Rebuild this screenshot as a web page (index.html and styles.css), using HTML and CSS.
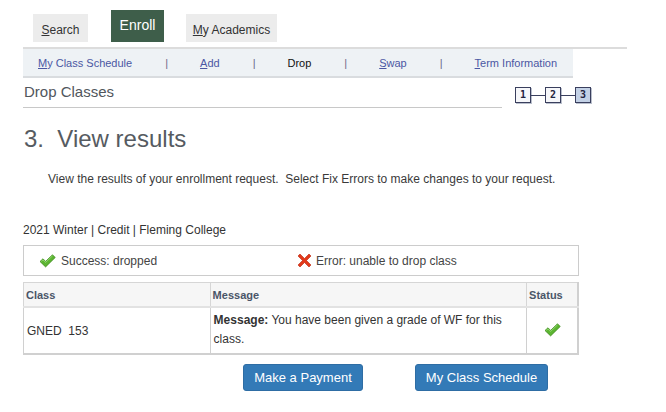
FILE: index.html
```html
<!DOCTYPE html>
<html>
<head>
<meta charset="utf-8">
<link rel="stylesheet" href="styles.css">
</head>
<body>
<div class="page">
  <div class="tabs">
    <div class="tab tab-search"><u>S</u>earch</div>
    <div class="tab tab-active">Enroll</div>
    <div class="tab tab-acad"><u>M</u>y Academics</div>
  </div>
  <div class="tabline"></div>
  <div class="subnav">
    <span class="lnk"><u>M</u>y Class Schedule</span>
    <span class="sep">|</span>
    <span class="lnk"><u>A</u>dd</span>
    <span class="sep">|</span>
    <span class="cur">Drop</span>
    <span class="sep">|</span>
    <span class="lnk"><u>S</u>wap</span>
    <span class="sep">|</span>
    <span class="lnk"><u>T</u>erm Information</span>
  </div>
  <div class="titlerow">
    <div class="pagetitle">Drop Classes</div>
    <div class="steps">
      <span class="step">1</span><span class="conn"></span><span class="step">2</span><span class="conn"></span><span class="step step-cur">3</span>
    </div>
  </div>
  <h1 class="h1">3.&nbsp; View results</h1>
  <p class="instr">View the results of your enrollment request.&nbsp; Select Fix Errors to make changes to your request.</p>
  <p class="term">2021 Winter | Credit | Fleming College</p>
  <div class="legend">
    <div class="leg leg-ok">
      <svg class="ico" width="17" height="14" viewBox="0 0 17 14"><path d="M1 7.5 L4 4.8 L6.6 7.4 L13.5 0.8 L16.2 3.5 L6.6 12.9 Z" fill="#5cb531" stroke="#3f8a1e" stroke-width="0.8" stroke-linejoin="round"/><path d="M2.2 7.4 L4 5.9 L6.6 8.4 L13.5 1.9" fill="none" stroke="#9be07a" stroke-width="0.8"/></svg>
      <span>Success: dropped</span>
    </div>
    <div class="leg leg-err">
      <svg class="ico" width="15" height="15" viewBox="0 0 15 15"><path d="M1 3 L3 1 L7.5 5.5 L12 1 L14 3 L9.5 7.5 L14 12 L12 14 L7.5 9.5 L3 14 L1 12 L5.5 7.5 Z" fill="#e2391b" stroke="#b8260e" stroke-width="0.6" stroke-linejoin="round"/></svg>
      <span>Error: unable to drop class</span>
    </div>
  </div>
  <table class="results">
    <thead>
      <tr><th class="c1">Class</th><th class="c2">Message</th><th class="c3">Status</th></tr>
    </thead>
    <tbody>
      <tr>
        <td class="c1">GNED&nbsp; 153</td>
        <td class="c2"><span class="msg"><b>Message:</b> You have been given a grade of WF for this class.</span></td>
        <td class="c3"><svg width="17" height="14" viewBox="0 0 17 14"><path d="M1 7.5 L4 4.8 L6.6 7.4 L13.5 0.8 L16.2 3.5 L6.6 12.9 Z" fill="#5cb531" stroke="#3f8a1e" stroke-width="0.8" stroke-linejoin="round"/><path d="M2.2 7.4 L4 5.9 L6.6 8.4 L13.5 1.9" fill="none" stroke="#9be07a" stroke-width="0.8"/></svg></td>
      </tr>
    </tbody>
  </table>
  <div class="buttons">
    <span class="btn btn-pay">Make a Payment</span>
    <span class="btn btn-sched">My Class Schedule</span>
  </div>
</div>
</body>
</html>
```
FILE: styles.css
```css
html, body { margin: 0; padding: 0; background: #fff; }
body { font-family: "Liberation Sans", Arial, sans-serif; color: #333; font-size: 12px; }
.page { padding-left: 23px; width: 620px; }

.tabs { display: flex; align-items: flex-end; height: 42px; }
.tab { display: flex; align-items: center; justify-content: center; background: #ececec; color: #333; font-size: 12px; height: 28px; }
.tab-search { margin-left: 10px; width: 55px; padding-top: 3px; box-sizing: border-box; }
.tab-active { margin-left: 23px; width: 53px; height: 32px; background: #3e5e4a; color: #fff; font-size: 14px; align-items: flex-start; padding-top: 7px; box-sizing: border-box; }
.tab-acad { margin-left: 22px; width: 91px; padding-top: 3px; box-sizing: border-box; }
.tabline { margin-top: 5px; width: 604px; height: 2px; background: #dcdcdc; }

.subnav { width: 550px; height: 29px; background: #eef2f5; border-bottom: 2px solid #d9dcdf; display: flex; align-items: center; padding: 1px 0 0 15px; box-sizing: border-box; font-size: 11px; }
.subnav .lnk { color: #4b57a3; }
.subnav .cur { color: #111; }
.subnav .sep { color: #6b6b8a; margin: 0 32px 0 33px; }

.titlerow { display: flex; align-items: flex-start; height: 30px; }
.pagetitle { width: 479px; height: 30px; border-bottom: 1px solid #c8c8c8; font-size: 15px; color: #51565c; padding-left: 1px; padding-top: 5px; box-sizing: border-box; }
.steps { display: flex; align-items: center; margin-left: 13px; margin-top: 9px; }
.step { width: 14px; height: 14px; border: 1px solid #3a3f5e; background: #f6f7fa; box-shadow: 1px 1px 0 #b9bfcc; font-family: "DejaVu Sans Mono", monospace; font-weight: bold; font-size: 10px; line-height: 14px; text-align: center; color: #1f2440; }
.step-cur { background: #c3d1e6; }
.conn { width: 14px; height: 1px; background: #3a3f5e; }

.h1 { margin: 17px 0 0 1px; font-size: 24px; font-weight: normal; color: #565b61; line-height: 28px; }
.instr { margin: 19px 0 0 25px; font-size: 12px; color: #3a3a3a; }
.term { margin: 37px 0 0 0; font-size: 12px; color: #333; }

.legend { margin-top: 8px; width: 554px; height: 29px; border: 1px solid #cccccc; display: flex; align-items: center; }
.leg { display: flex; align-items: center; color: #444; font-size: 12px; }
.leg .ico { margin-right: 5px; }
.leg-ok { margin-left: 15px; width: 258px; }
.leg-err span { margin-left: -1px; }

.results { margin-top: 6px; border-collapse: collapse; width: 556px; border: 1px solid #cccccc; border-right: 2px solid #d0d0d0; border-bottom: 2px solid #d0d0d0; }
.results th { background: #f6f6f6; color: #4a5568; font-weight: bold; font-size: 11px; text-align: left; height: 23px; padding: 0 2px; border: 1px solid #d6d6d6; border-bottom: 2px solid #e2e2e2; }
.results td { height: 41px; padding: 1px 3px; border: 1px solid #d0d0d0; font-size: 12px; color: #333; line-height: 19px; vertical-align: middle; }
.results .c1 { width: 181px; }
.results td.c1 { padding-top: 3px; }
.results .c2 { width: 312px; }
.results td.c2 { vertical-align: top; padding-top: 3px; }
.results .c3 { width: 44px; }
.results td.c3 { text-align: center; padding-top: 4px; padding-bottom: 0; }
.results td.c3 svg { display: inline-block; }

.buttons { display: flex; margin-top: 9px; margin-left: 220px; }
.btn { display: flex; align-items: center; justify-content: center; height: 27px; background: #337ab7; color: #fff; font-size: 13px; border-radius: 3px; border: 1px solid #2e6da4; box-sizing: border-box; }
.btn-pay { width: 120px; }
.btn-sched { width: 133px; margin-left: 52px; }
```
